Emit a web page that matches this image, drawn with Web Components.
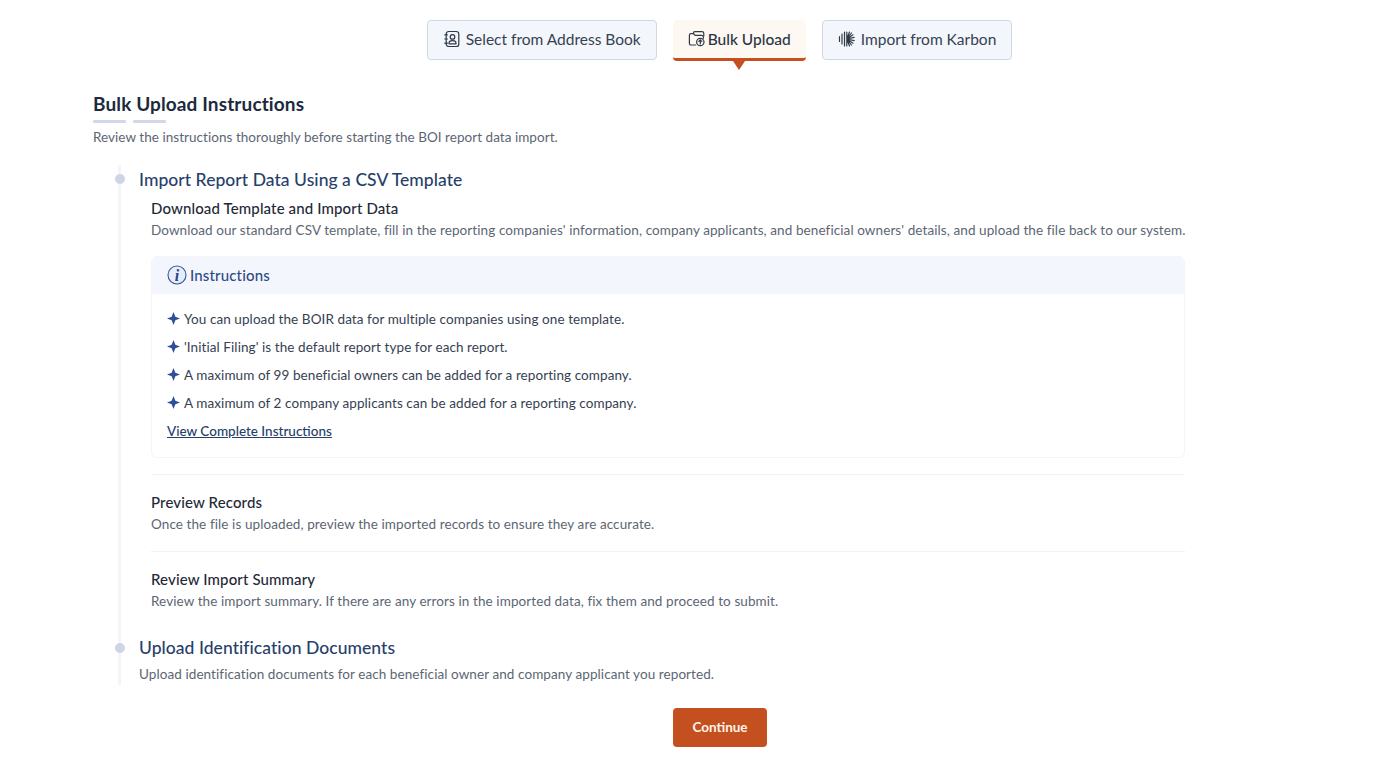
<!DOCTYPE html>
<html lang="en">
  <head>
    <meta charset="UTF-8" />
    <title>Bulk Upload</title>
    <style>
      html, body { margin: 0; background: #fff; }
      body { font-family: Lato, "Liberation Sans", sans-serif; color: #1f2937; }
    </style>
  </head>
  <body>
    <upload-page>
      <tab-bar>
        <tab-button>
          <svg slot="icon" viewBox="0 0 18 18"><rect x="3.2" y="1.5" width="12.6" height="15" rx="2.6"/><circle cx="9.5" cy="6.9" r="2.3"/><path d="M6 13.8v-.6c0-1.7 1.4-2.6 3.5-2.6s3.5.9 3.5 2.6v.6ZM1.8 4.8h2.6M1.8 9h2.6M1.8 13.2h2.6"/></svg>
          Select from Address Book
        </tab-button>
        <tab-button active>
          <svg slot="icon" viewBox="0 0 18 18"><path d="M7.6 15H3a1.6 1.6 0 0 1-1.6-1.6V5.2c0-.9.7-1.6 1.6-1.6h2.6l1.5 1.8h6.4c1 0 1.9.8 1.9 1.8v1"/><path d="M5.4 3.6V3.2c0-.9.7-1.5 1.5-1.5h7c1 0 1.9.8 1.9 1.8V6"/><circle cx="12.3" cy="12" r="3.7"/><path d="M12.3 14v-4M10.8 11.4l1.5-1.4 1.5 1.4"/></svg>
          Bulk Upload
        </tab-button>
        <tab-button>
          <svg slot="icon" viewBox="0 0 18 18"><path d="M1.5 6.5v5M4 4v10M6.5 2v14M8.8 2v14M8.8 9 11.5 2M8.8 9l4.6-6M8.8 9l6.2-4.2M8.8 9l7.4-1.6M8.8 9l7.4 1.6M8.8 9l6.2 4.2M8.8 9l4.6 6M8.8 9l2.7 7"/></svg>
          Import from Karbon
        </tab-button>
      </tab-bar>

      <section-title subtitle="Review the instructions thoroughly before starting the BOI report data import.">Bulk Upload Instructions</section-title>

      <time-line>
        <time-step heading="Import Report Data Using a CSV Template">
          <sub-step heading="Download Template and Import Data" text="Download our standard CSV template, fill in the reporting companies' information, company applicants, and beneficial owners' details, and upload the file back to our system."></sub-step>
          <info-box>
            <bullet-item>You can upload the BOIR data for multiple companies using one template.</bullet-item>
            <bullet-item>'Initial Filing' is the default report type for each report.</bullet-item>
            <bullet-item>A maximum of 99 beneficial owners can be added for a reporting company.</bullet-item>
            <bullet-item>A maximum of 2 company applicants can be added for a reporting company.</bullet-item>
          </info-box>
          <sub-step divided heading="Preview Records" text="Once the file is uploaded, preview the imported records to ensure they are accurate."></sub-step>
          <sub-step divided heading="Review Import Summary" text="Review the import summary. If there are any errors in the imported data, fix them and proceed to submit."></sub-step>
        </time-step>
        <time-step heading="Upload Identification Documents" text="Upload identification documents for each beneficial owner and company applicant you reported."></time-step>
      </time-line>

      <primary-button>Continue</primary-button>
    </upload-page>

    <script>
      function define(name, css, html, init) {
        customElements.define(
          name,
          class extends HTMLElement {
            constructor() {
              super();
              this.attachShadow({ mode: "open" }).innerHTML = `<style>${css}</style>${html}`;
            }
            connectedCallback() {
              if (init) init(this, this.shadowRoot);
            }
          }
        );
      }

      define(
        "upload-page",
        `:host { display: block; width: 1381px; height: 760px; box-sizing: border-box; padding: 20px 196px 0 93px; overflow: hidden; }`,
        `<slot></slot>`
      );

      define(
        "tab-bar",
        `:host { display: flex; justify-content: center; gap: 16px; height: 41px; margin: 0 -161px 0 0; }`,
        `<slot></slot>`
      );

      define(
        "tab-button",
        `:host { display: block; font-size: 15.5px; letter-spacing: 0; color: #364152; }
         .tab { display: flex; align-items: center; gap: 5px; box-sizing: border-box; height: 40px; padding: 0 15px 2px;
                background: #f3f7fb; border: 1px solid #cfd7e3; border-radius: 4px; white-space: nowrap; }
         ::slotted(svg) { width: 18px; height: 18px; fill: none; stroke: #2f3a48; stroke-width: 1.2; stroke-linecap: round; stroke-linejoin: round; flex: none; }
         :host([active]) { font-weight: 500; color: #2b3544; position: relative; }
         :host([active]) .tab { background: #fdf8f2; border: 0; border-bottom: 3px solid #c5501f; height: 41px; padding: 0 15px 1px; gap: 2px; border-radius: 5px 5px 4px 4px; }
         :host([active])::after { content: ""; position: absolute; left: 50%; top: 41px; margin-left: -6px;
                border-left: 6px solid transparent; border-right: 6px solid transparent; border-top: 9px solid #c5501f; }`,
        `<div class="tab"><slot name="icon"></slot><span><slot></slot></span></div>`
      );

      define(
        "section-title",
        `:host { display: block; margin-top: 31px; }
         h2 { margin: 0; font-size: 19px; line-height: 24px; font-weight: 700; color: #1c2a3d; letter-spacing: .12px; }
         .bars { display: flex; gap: 7px; margin-top: 4px; }
         .bars i { display: block; width: 33px; height: 3px; background: #d3d8e8; border-radius: 1px; }
         p { margin: 4px 0 0; font-size: 13.5px; line-height: 20px; color: #5c6673; letter-spacing: .04px; }`,
        `<h2><slot></slot></h2><div class="bars"><i></i><i></i></div><p></p>`,
        (el, root) => { root.querySelector("p").textContent = el.getAttribute("subtitle"); }
      );

      define(
        "time-line",
        `:host { display: block; margin: 18px 0 0 25px; border-left: 3px solid #f3f5f9; height: 520px; box-sizing: border-box; padding-left: 18px; }`,
        `<slot></slot>`
      );

      define(
        "time-step",
        `:host { display: block; position: relative; padding-top: 2.5px; margin-bottom: 23px; }
         .dot { position: absolute; left: -24px; top: 9px; width: 10px; height: 10px; border-radius: 50%; background: #d0d5e6; }
         h3 { margin: 0; font-size: 17.5px; line-height: 24px; font-weight: 500; color: #27406a; letter-spacing: .05px; }
         p { margin: 4px 0 0; font-size: 13.5px; line-height: 20px; color: #5c6673; letter-spacing: .08px; }
         p:empty { display: none; }
         .body { padding-left: 12px; }`,
        `<span class="dot"></span><h3></h3><p></p><div class="body"><slot></slot></div>`,
        (el, root) => {
          root.querySelector("h3").textContent = el.getAttribute("heading");
          root.querySelector("p").textContent = el.getAttribute("text") || "";
        }
      );

      define(
        "sub-step",
        `:host { display: block; padding-top: 5px; }
         :host([divided]) { border-top: 1px solid #f0f2f5; margin-top: 17px; padding-top: 16px; }
         h4 { margin: 0 0 1px; font-size: 15px; line-height: 22px; font-weight: 500; color: #1f2937; letter-spacing: .13px; }
         p { margin: 0; font-size: 13.5px; line-height: 20px; color: #5c6673; letter-spacing: .09px; white-space: nowrap; }`,
        `<h4></h4><p></p>`,
        (el, root) => {
          root.querySelector("h4").textContent = el.getAttribute("heading");
          root.querySelector("p").textContent = el.getAttribute("text");
        }
      );

      define(
        "info-box",
        `:host { display: block; margin: 16px 0 -1px; border: 1px solid #f4f5f8; border-radius: 6px; overflow: hidden; height: 202px; box-sizing: border-box; }
         header { display: flex; align-items: center; gap: 3px; height: 37px; padding: 0 15px; background: #f3f7fd; font-size: 15px; color: #2f4a86; letter-spacing: .15px; font-weight: 500; }
         svg { width: 20px; height: 20px; }
         .list { display: flex; flex-direction: column; gap: 8px; padding: 15px 15px 0; }
         a { font-size: 13.5px; line-height: 20px; font-weight: 500; color: #27406a; text-decoration: underline; }`,
        `<header>
           <svg viewBox="0 0 20 20"><circle cx="10" cy="10" r="9" fill="#e6edfa" stroke="#3a5596" stroke-width="1.1"/><text x="10" y="15.5" text-anchor="middle" font-family="Liberation Serif" font-style="italic" font-weight="700" font-size="16" fill="#2a4480">i</text></svg>
           <span>Instructions</span>
         </header>
         <div class="list"><slot></slot><a href="#">View Complete Instructions</a></div>`
      );

      define(
        "bullet-item",
        `:host { display: flex; align-items: center; gap: 4px; font-size: 13.5px; line-height: 20px; color: #364152; letter-spacing: .08px; }
         svg { width: 13px; height: 13px; flex: none; }`,
        `<svg viewBox="0 0 14 14"><path d="M7 0 9 5 14 7 9 9 7 14 5 9 0 7 5 5Z" fill="#2f4f9a"/></svg><span><slot></slot></span>`
      );

      define(
        "primary-button",
        `:host { display: block; width: 94px; margin: 23px 0 0 580px; }
         button { display: block; width: 94px; height: 39px; padding: 0 0 2px; border: 0; border-radius: 4px; background: #c5501f; color: #fff5ec; font: 700 13.5px Lato, "Liberation Sans", sans-serif; }`,
        `<button><slot></slot></button>`
      );
    </script>
  </body>
</html>
